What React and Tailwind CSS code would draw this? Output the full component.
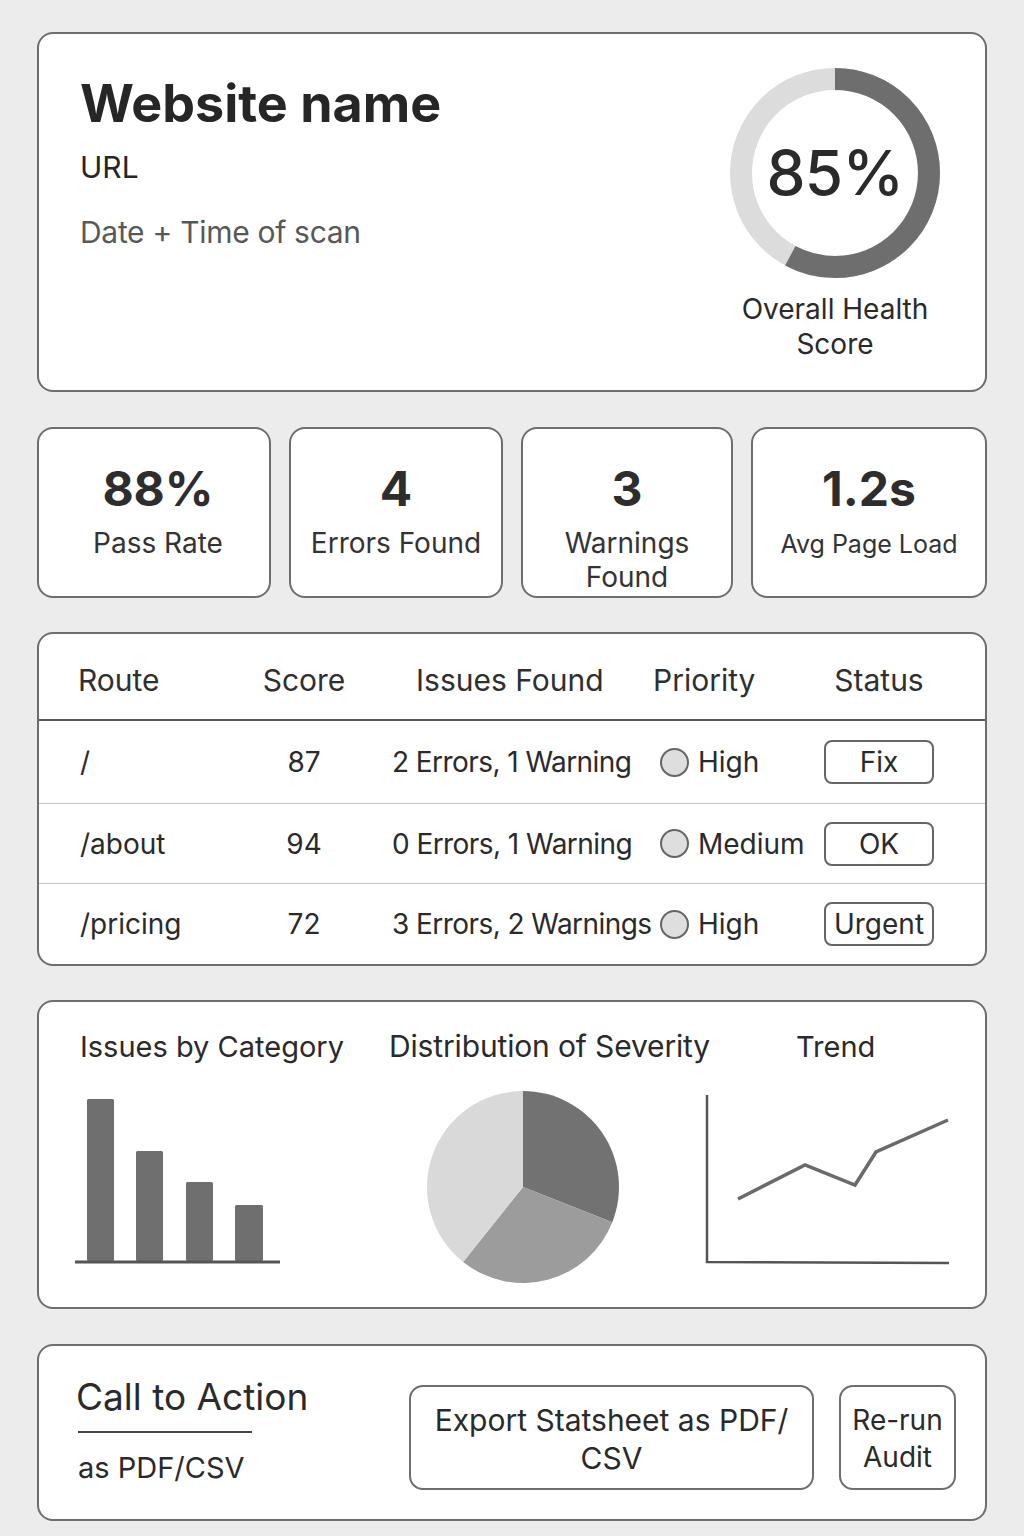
import React from "react";

function Card({ className = "", children }) {
  return (
    <div className={"bg-white border-2 border-[#6e6e6e] rounded-[16px] " + className}>
      {children}
    </div>
  );
}

function Donut() {
  const r = 94;
  const c = 2 * Math.PI * r;
  const frac = 0.578;
  return (
    <div className="relative w-[212px] h-[212px]">
      <svg width="212" height="212" viewBox="0 0 212 212">
        <circle cx="106" cy="106" r={r} fill="none" stroke="#dcdcdc" strokeWidth="22" />
        <circle
          cx="106"
          cy="106"
          r={r}
          fill="none"
          stroke="#6e6e6e"
          strokeWidth="22"
          strokeDasharray={`${c * frac} ${c}`}
          transform="rotate(-90 106 106)"
        />
      </svg>
      <div className="absolute inset-0 flex items-center justify-center text-[62px] leading-none font-medium tracking-[-0.01em] text-[#2a2a2a]">
        85%
      </div>
    </div>
  );
}

function Stat({ value, label, className = "" }) {
  return (
    <Card className={"h-[171px] flex flex-col items-center pt-[35px] " + className}>
      <div className="text-[48px] leading-[50px] font-bold text-[#2d2d2d]">{value}</div>
      <div className="mt-[12px] text-[28px] leading-[34px] text-[#333] text-center">{label}</div>
    </Card>
  );
}

function Radio() {
  return <span className="inline-block w-[29px] h-[29px] rounded-full bg-[#dedede] border-2 border-[#666]" />;
}

function StatusBtn({ children }) {
  return (
    <div className="w-[110px] h-[44px] border-2 border-[#666] rounded-[8px] flex items-center justify-center text-[28px] leading-none text-[#2a2a2a]">
      {children}
    </div>
  );
}

const rows = [
  { route: "/", score: "87", issues: "2 Errors, 1 Warning", pr: "High", st: "Fix", h: "h-[83px] border-b border-[#c4c4c4]" },
  { route: "/about", score: "94", issues: "0 Errors, 1 Warning", pr: "Medium", st: "OK", h: "h-[80px] border-b border-[#c4c4c4]" },
  { route: "/pricing", score: "72", issues: "3 Errors, 2 Warnings", pr: "High", st: "Urgent", h: "flex-1" },
];

const cols = "grid grid-cols-[152px_144px_277px_171px_110px] items-center pl-[41px]";

export default function App() {
  return (
    <div className="min-h-[1536px] bg-[#ececec] px-[37px] pt-[32px] pb-[15px] flex flex-col gap-[34px] font-['Inter',sans-serif] text-[#2a2a2a]">
      {/* Header card */}
      <Card className="h-[360px] shrink-0 flex justify-between pl-[41px] pr-[44px]">
        <div className="flex flex-col pt-[44px]">
          <div className="text-[52px] leading-[52px] font-bold text-[#262626]">Website name</div>
          <div className="mt-[19px] text-[30px] leading-[36px] text-[#262626]">URL</div>
          <div className="mt-[29px] text-[30px] leading-[36px] text-[#585858] tracking-[-0.01em]">Date + Time of scan</div>
        </div>
        <div className="flex flex-col items-center pt-[33px]">
          <Donut />
          <div className="mt-[13px] text-[28px] leading-[35px] text-center text-[#2a2a2a]">
            Overall Health
            <br />
            Score
          </div>
        </div>
      </Card>

      {/* Stats */}
      <div className="mt-[1px] grid grid-cols-[234px_214px_212px_236px] gap-[18px] shrink-0">
        <Stat value="88%" label="Pass Rate" className="pl-[8px]" />
        <Stat value="4" label="Errors Found" />
        <Stat
          value="3"
          label={
            <>
              Warnings
              <br />
              Found
            </>
          }
        />
        <Stat value="1.2s" label={<span className="text-[25px]">Avg Page Load</span>} />
      </div>

      {/* Table */}
      <Card className="h-[334px] shrink-0 flex flex-col overflow-hidden">
        <div className={cols + " h-[87px] border-b-2 border-[#5a5a5a] pt-[6px] text-[30px] leading-[36px] text-[#2f2f2f]"}>
          <div className="-ml-[2px]">Route</div>
          <div className="text-center">Score</div>
          <div className="pl-[40px] whitespace-nowrap">Issues Found</div>
          <div>Priority</div>
          <div className="text-center">Status</div>
        </div>
        {rows.map((r) => (
          <div key={r.route} className={cols + " " + r.h + " text-[28px] leading-[34px] text-[#2a2a2a]"}>
            <div>{r.route}</div>
            <div className="text-center">{r.score}</div>
            <div className="pl-[16px] tracking-[-0.02em] whitespace-nowrap">{r.issues}</div>
            <div className="flex items-center gap-[9px] pl-[7px]">
              <Radio />
              <span>{r.pr}</span>
            </div>
            <StatusBtn>{r.st}</StatusBtn>
          </div>
        ))}
      </Card>

      {/* Charts */}
      <Card className="h-[309px] shrink-0 flex pl-[41px] pt-[27px]">
        <div className="w-[309px] flex flex-col">
          <div className="text-[29px] leading-[35px] text-[#2a2a2a] whitespace-nowrap">Issues by Category</div>
          <svg width="309" height="230" viewBox="80 1064 309 230" className="overflow-visible">
            <rect x="87" y="1099" width="27" height="162" rx="1.5" fill="#6f6f6f" />
            <rect x="136" y="1151" width="27" height="110" rx="1.5" fill="#6f6f6f" />
            <rect x="186" y="1182" width="27" height="79" rx="1.5" fill="#6f6f6f" />
            <rect x="235" y="1205" width="28" height="56" rx="1.5" fill="#6f6f6f" />
            <line x1="75" y1="1262" x2="280" y2="1262" stroke="#555" strokeWidth="3" />
          </svg>
        </div>
        <div className="w-[331px] flex flex-col">
          <div className="text-[30px] leading-[35px] text-[#2a2a2a] whitespace-nowrap tracking-[-0.005em]">Distribution of Severity</div>
          <svg width="331" height="230" viewBox="389 1064 331 230" className="overflow-visible">
            <path d="M523 1187 L523 1091 A96 96 0 0 1 612.3 1222.2 Z" fill="#727272" />
            <path d="M523 1187 L612.3 1222.2 A96 96 0 0 1 463.1 1262 Z" fill="#9c9c9c" />
            <path d="M523 1187 L463.1 1262 A96 96 0 0 1 523 1091 Z" fill="#d9d9d9" />
          </svg>
        </div>
        <div className="w-[265px] flex flex-col">
          <div className="ml-[76px] text-[29px] leading-[35px] text-[#2a2a2a]">Trend</div>
          <svg width="265" height="230" viewBox="720 1064 265 230" className="overflow-visible">
            <polyline points="707,1095 707,1262 949,1263" fill="none" stroke="#555" strokeWidth="2.5" />
            <polyline
              points="738,1199 805,1165 855,1185 876,1152 948,1120"
              fill="none"
              stroke="#6a6a6a"
              strokeWidth="3.5"
              strokeLinejoin="miter"
            />
          </svg>
        </div>
      </Card>

      {/* CTA */}
      <Card className="mt-[1px] h-[177px] shrink-0 flex items-start pl-[37px] pr-[29px]">
        <div className="flex flex-col pt-[30px]">
          <div className="text-[37px] leading-[42px] text-[#2a2a2a]">Call to Action</div>
          <div className="mt-[13px] ml-[2px] w-[174px] h-[2px] bg-[#444]" />
          <div className="mt-[17px] ml-[2px] text-[29px] leading-[35px] text-[#2a2a2a]">as PDF/CSV</div>
        </div>
        <div className="ml-auto flex gap-[25px] pt-[39px]">
          <div className="w-[405px] h-[105px] border-2 border-[#6e6e6e] rounded-[14px] flex items-center justify-center text-center text-[30px] leading-[38px] text-[#2a2a2a] pt-[3px]">
            Export Statsheet as PDF/
            <br />
            CSV
          </div>
          <div className="w-[117px] h-[105px] border-2 border-[#6e6e6e] rounded-[14px] flex items-center justify-center text-center text-[28px] leading-[37px] text-[#2a2a2a] pt-[3px]">
            Re-run
            <br />
            Audit
          </div>
        </div>
      </Card>
    </div>
  );
}
